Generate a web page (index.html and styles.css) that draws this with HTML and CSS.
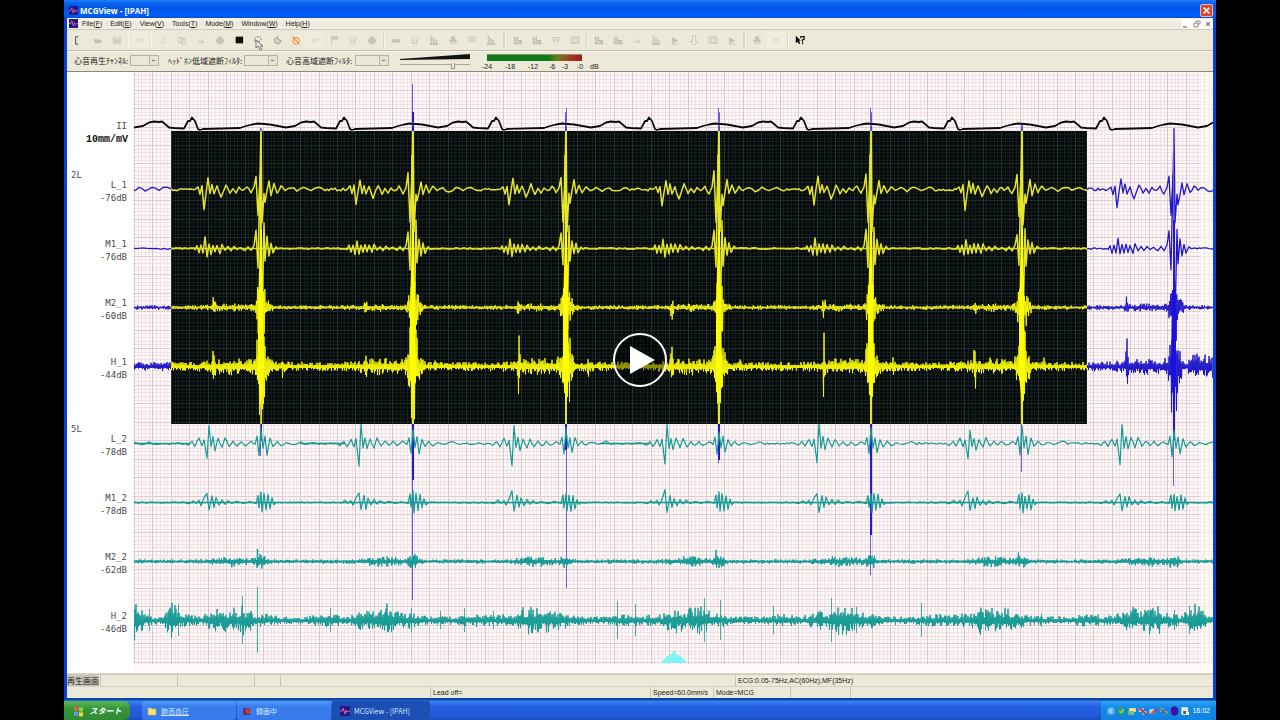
FILE: index.html
```html
<!DOCTYPE html>
<html lang="ja">
<head>
<meta charset="utf-8">
<title>MCGView - [IPAH]</title>
<link rel="stylesheet" href="styles.css">
</head>
<body>
<main class="desktop">
  <section class="app">
    <header class="titlebar">
      <svg class="app-icon" viewBox="0 0 10 10"><rect width="10" height="10" fill="#1c1a8c"/><path d="M0 5h2l1-3 2 6 1-4 1 2 3-1" fill="none" stroke="#f05a8c"/></svg>
      <h1>MCGView - [IPAH]</h1>
      <button class="close" aria-label="Close"><svg viewBox="0 0 13 13"><path d="M3 3l7 7M10 3l-7 7" stroke="#ffe9dc" stroke-width="2"/></svg></button>
    </header>
    <nav class="menubar">
      <svg class="app-icon" viewBox="0 0 10 10"><rect width="10" height="10" fill="#1c1a8c"/><path d="M0 5h2l1-3 2 6 1-4 1 2 3-1" fill="none" stroke="#f05a8c"/></svg>
      <button>File(<u>F</u>)</button><button>Edit(<u>E</u>)</button><button>View(<u>V</u>)</button><button>Tools(<u>T</u>)</button><button>Mode(<u>M</u>)</button><button>Window(<u>W</u>)</button><button>Help(<u>H</u>)</button>
      <span class="mdi">
        <button aria-label="Minimize child"><svg viewBox="0 0 8 8"><path d="M1 7h4" stroke="#555"/></svg></button>
        <button aria-label="Restore child"><svg viewBox="0 0 8 8"><path d="M3 3V1h4v3H5M1 3h4v4H1z" fill="none" stroke="#888"/></svg></button>
        <button aria-label="Close child"><svg viewBox="0 0 8 8"><path d="M2 2l4 4M6 2l-4 4" stroke="#556"/></svg></button>
      </span>
    </nav>
    <div class="toolbar" id="toolbar"></div>
    <div class="filters">
      <label class="f1"><span>心音再生ﾁｬﾝﾈﾙ:</span><select><option></option></select></label>
      <label class="f2"><span>ﾍｯﾄﾞﾎﾝ低域遮断ﾌｨﾙﾀ:</span><select><option></option></select></label>
      <label class="f3"><span>心音高域遮断ﾌｨﾙﾀ:</span><select><option></option></select></label>
      <div class="volume">
        <svg viewBox="0 0 70 7"><path d="M0 5L70 0V5L0 6z" fill="#111"/></svg>
        <input type="range" min="0" max="100" value="78" aria-label="Volume">
      </div>
      <div class="meter">
        <div class="meter-bar"></div>
        <div class="scale"><span>-24</span><span>-18</span><span>-12</span><span>-6</span><span>-3</span><span>-0</span><span>dB</span></div>
      </div>
    </div>
    <div class="chart">
      <svg id="chart" viewBox="67 72 1146 601" role="img" aria-label="Phonocardiogram">
        <defs><clipPath id="sel"><rect x="171" y="131" width="916" height="293"/></clipPath><clipPath id="plot"><rect x="134" y="72" width="1079" height="592"/></clipPath></defs>
        <rect x="67" y="72" width="1146" height="601" fill="#fff"/>
        <rect x="134" y="72" width="1079" height="600" fill="#fff9fa"/>
        <g id="grid" shape-rendering="crispEdges"></g>
        <rect x="1200" y="72" width="13" height="601" fill="#fbfbf0" opacity=".6"/>
        <path d="M661 663l6-7 4-1 3-5 3 5 4 1 6 7z" fill="#7ff4f2"/>
        <g id="traces" fill="none" stroke-linejoin="round" clip-path="url(#plot)"></g>
        <g id="labels" class="labels"></g>
      </svg>
      <button class="play" aria-label="Play"><svg viewBox="0 0 54 54"><circle cx="27" cy="27" r="26" fill="#000" fill-opacity=".4" stroke="#fff" stroke-width="2"/><path d="M17 13v28l25-14z" fill="#fff"/></svg></button>
    </div>
    <footer class="status">
      <div class="row one"><span class="mode">再生画面</span><span></span><span></span><span></span><span></span><span>ECG:0.05-75Hz,AC(60Hz),MF(35Hz)</span></div>
      <div class="row two"><span></span><span>Lead off=</span><span>Speed=60.0mm/s</span><span>Mode=MCG</span><span></span><span></span></div>
    </footer>
  </section>
  <footer class="taskbar">
    <button class="start"><svg viewBox="0 0 12 12"><path d="M1 2q2-1 4 0v4q-2-1-4 0z" fill="#f0603a"/><path d="M6 2q2 1 4 0v4q-2 1-4 0z" fill="#8ed04a"/><path d="M1 7q2-1 4 0v4q-2-1-4 0z" fill="#5d9cf5"/><path d="M6 7q2 1 4 0v4q-2 1-4 0z" fill="#f7d23e"/></svg>スタート</button>
    <button class="task"><svg viewBox="0 0 10 10"><path d="M1 2h3l1 1h4v6H1z" fill="#f6e27a" stroke="#c9a93a" stroke-width=".6"/></svg><span class="lined">肺高血圧</span></button>
    <button class="task"><svg viewBox="0 0 10 10"><rect x="1" y="2" width="7" height="7" fill="#5a3a6c"/><circle cx="6" cy="5" r="2.5" fill="#c83c3c"/></svg><span>録画中</span></button>
    <button class="task active"><svg viewBox="0 0 10 10"><rect width="10" height="10" fill="#1c1a8c"/><path d="M0 5h2l1-3 2 6 1-4 1 2 3-1" fill="none" stroke="#f05a8c"/></svg><span>MCGView - [IPAH]</span></button>
    <div class="tray">
      <svg viewBox="0 0 88 10">
        <circle cx="6" cy="5" r="4" fill="#5cb8f4"/><path d="M7 3L5 5l2 2" stroke="#fff" fill="none"/>
        <circle cx="17" cy="5" r="4" fill="#35a05c"/><path d="M15 5l2 2 2-4" stroke="#b8f0b8" fill="none"/>
        <path d="M25 2h7v4h-7z" fill="#f1e48a"/><path d="M24 5h6v4h-6z" fill="#7fc36a"/>
        <path d="M35 2h5v4h-5zM39 5h4v4h-4z" fill="#b7c4d8"/><path d="M36 2l7 7" stroke="#c6283c" stroke-width="2"/>
        <path d="M46 3h5v5h-5z" fill="#c9cbe0"/><path d="M48 8l6-6" stroke="#d33a48" stroke-width="2"/>
        <path d="M57 2h4v4h-4zM61 5h4v4h-4z" fill="#8a97a8"/><path d="M58 3l6 6" stroke="#26313c"/>
        <ellipse cx="72" cy="5" rx="4" ry="5" fill="#3a12a4"/>
        <path d="M79 1h7v8h-7z" fill="#e9e4d4"/><path d="M81 5h3v3h-3z" fill="#555"/><path d="M84 6h3v3h-3z" fill="#fff"/>
      </svg>
      <time>18:02</time>
    </div>
  </footer>
</main>
<script src="app.js"></script>
</body>
</html>
```
FILE: styles.css
```css
* { box-sizing: border-box; }
body { margin: 0; background: #000; font-family: "Liberation Sans", "Noto Sans CJK JP", sans-serif; font-size: 8px; color: #222; }
button { border: 0; padding: 0; background: none; font: inherit; color: inherit; }
svg { display: block; }
.desktop { height: 100vh; margin: 0 5%; display: grid; grid-template-rows: minmax(0, 1fr) auto; }
.app { min-height: 0; display: grid; grid-template-rows: auto auto auto auto minmax(0, 1fr) auto; border: solid #0a3fd6; border-width: 0 3px; background: #ece9d8; }
.app-icon { width: 9px; height: 9px; flex: none; }
.titlebar { height: 18px; margin: 0 -3px; padding: 2px 3px 0 5px; display: flex; align-items: center; gap: 2px; color: #fff; background: linear-gradient(#1c7cf8 0, #0a62ee 20%, #0054e3 45%, #0060fb 80%, #0050d8); }
.titlebar h1 { margin: 0; font: bold 8px "Open Sans", sans-serif; }
.close { margin-left: auto; width: 13px; height: 13px; border: 1px solid #e8b8b8; border-radius: 2px; background: #d8482c; }
.menubar { height: 12px; padding-left: 2px; display: flex; align-items: center; gap: 8px; background: linear-gradient(#f7efe4 20%, #e9ebdc 60%, #f8ece4); border-bottom: 1px solid #d0cbb8; font-size: 7px; }
.menubar .app-icon { margin-right: -4px; }
.mdi { margin-left: auto; display: flex; gap: 3px; background: #fff; padding: 1px 1px; }
.mdi svg { width: 8px; height: 8px; }
.toolbar { height: 21px; padding-left: 2px; display: flex; align-items: center; background: #ece9d8; border-bottom: 1px solid #c3bfae; }
.toolbar button { position: relative; width: 19px; height: 16px; flex: none; display: grid; place-items: center; }
.toolbar svg { width: 10px; height: 10px; }
.toolbar .dim svg { opacity: .26; filter: blur(.6px); }
.toolbar .lit { background: #f0eddf; }
.toolbar i { flex: none; height: 15px; }
.toolbar i.line { background: linear-gradient(90deg, transparent 40%, #dad6c6 40% 60%, #f8f6ee 60% 80%, transparent 80%); }
.toolbar .cursor { position: absolute; left: 7px; top: 8px; width: 12px; height: 12px; z-index: 1; }
.filters { height: 21px; padding-left: 7px; display: flex; align-items: flex-start; border-bottom: 1px solid #8b8978; border-top: 1px solid #f8f6ec; background: #ece9d8; }
.filters label { display: flex; justify-content: space-between; align-items: center; height: 17px; white-space: nowrap; font: 8px "Noto Sans CJK JP", sans-serif; }
.f1 { width: 85px; margin-right: 9px; }
.f2 { width: 110px; margin-right: 8px; }
.f3 { width: 103px; margin-right: 11px; }
.filters select { appearance: none; flex: none; width: 29px; height: 11px; padding: 0; border: 1px solid #b5b2a4; border-radius: 0; font-size: 7px; background: linear-gradient(#777, #777) right 3px top 4px / 3px 1px no-repeat, linear-gradient(90deg, #b5b2a4 1px, #e6e2d2 1px) right / 9px 100% no-repeat, #e9e6da; }
.filters .f2 select, .filters .f3 select { width: 34px; }
.volume { width: 70px; margin: 2px 17px 0 0; }
.volume svg { width: 70px; height: 7px; }
.volume input { appearance: none; display: block; width: 100%; height: 7px; margin: 1px 0 0; background: linear-gradient(#aaa89b, #aaa89b) center top 2px / 100% 1px no-repeat; }
.volume input::-webkit-slider-thumb { appearance: none; width: 4px; height: 6px; border: 1px solid #99968a; border-top: 0; background: #f4f2e8; }
.meter { width: 114px; padding-top: 2px; }
.meter-bar { width: 95px; height: 7px; border-top: 1px solid #8f8c78; background: linear-gradient(90deg, #0c7a16 65%, #6a8218 74%, #9c4a1e 84%, #a81618); }
.scale { display: grid; grid-template-columns: 23px 23px 21px 13px 15px 13px 12px; margin-left: -5px; font-size: 7px; line-height: 12px; }
.chart { min-height: 0; min-width: 0; position: relative; background: #fff; }
.chart > svg { width: 100%; height: 100%; }
.labels { font-family: "DejaVu Sans Mono", monospace; font-size: 9px; fill: #4a4a4a; }
.labels .bold { font: bold 10px "Liberation Mono", monospace; fill: #111; }
.play { position: fixed; left: 50%; top: 50%; width: 54px; height: 54px; transform: translate(-50%, -50%); }
.status { background: #ece9d8; font-size: 7px; line-height: 11px; border-top: 1px solid #d9d5c5; }
.status .row { height: 12px; display: grid; white-space: nowrap; }
.status .row span { border-left: 1px solid #c9c5b4; padding-left: 2px; overflow: hidden; }
.status .row span:first-child { border: 0; }
.status .one { grid-template-columns: 33px 77px 77px 26px 455px 1fr; border-top: 1px solid #cfcbbb; }
.status .two { grid-template-columns: 363px 220px 63px 77px 60px 1fr; border-top: 1px solid #d6d2c2; }
.status .row .mode { padding: 0; font: 8px/11px "Noto Sans CJK JP", sans-serif; justify-self: start; background: #c8c5b8; }
.taskbar { height: 22px; padding-top: 3px; display: flex; background: linear-gradient(#0a48a8 0 2px, #3c86f4 3px, #2560de 8px, #2159d8 80%, #1c4cc0); color: #fff; font: 7px "Noto Sans CJK JP", sans-serif; }
.start { width: 66px; margin-right: 12px; display: flex; align-items: center; justify-content: center; gap: 5px; background: linear-gradient(#5fb85a, #35963a 40%, #2f8a34); border-radius: 0 6px 6px 0; font: italic bold 8px "Noto Sans CJK JP", sans-serif; }
.start svg { width: 12px; height: 12px; }
.task { width: 94px; margin-right: 1px; padding-left: 5px; display: flex; align-items: center; gap: 4px; border-radius: 2px; background: linear-gradient(#5098fa, #3a7eee 30%, #3878ea); color: #d8e8ff; }
.task svg { width: 10px; height: 10px; }
.task .lined { text-decoration: underline; }
.task.active { width: 98px; padding-left: 8px; background: #1c4eb4; }
.tray { width: 115px; margin-left: auto; padding: 0 6px 0 4px; display: flex; align-items: center; justify-content: space-between; background: linear-gradient(#28a4f4, #1288e6 40%, #1284e0); }
.tray svg { width: 85px; height: 10px; }
.tray time { font: 7px "Liberation Sans", sans-serif; white-space: nowrap; }
```
FILE: app.js
```js
const NS = 'http://www.w3.org/2000/svg';
function add(parent, name, attrs, text) {
  const el = document.createElementNS(NS, name);
  for (const k in attrs) el.setAttribute(k, attrs[k]);
  if (text) el.textContent = text;
  parent.appendChild(el);
  return el;
}

/* Toolbar */
const shapes = {
  page: '<path d="M5 2H2v9h3" fill="none" stroke="#333"/>',
  open: '<path d="M1 5h6l1 1h3l-2 4H2z" fill="#555"/>',
  save: '<path d="M1 2h10v9H1z" fill="#888"/><path d="M3 2h6v3H3z" fill="#ccc"/>',
  soft: '<path d="M2 4h8v5H2z" fill="#bbb"/>',
  cut: '<path d="M4 2l4 6M8 2L4 8" stroke="#999"/><path d="M2 9h8" stroke="#999"/>',
  copy: '<path d="M2 3h5v6H2zM5 5h5v6H5z" fill="none" stroke="#555"/>',
  arrow: '<path d="M2 7h5V4l3 4-3 3V9H2z" fill="#888"/>',
  print: '<path d="M3 2h6v9H3zM1 5h10v4H1z" fill="#666"/>',
  black: '<path d="M2 2h9v8H2z" fill="#0c0c04"/>',
  glass: '<path d="M2 7Q2 2 6 2t4 4" fill="none" stroke="#555" stroke-dasharray="2 1"/><path d="M3 7h5v2H3z" fill="#777"/>',
  hand: '<path d="M3 5l4-3v3l4 2-3 4-5-2z" fill="#d4d1c4" stroke="#999686"/>',
  red: '<circle cx="6" cy="7" r="4" fill="#ffe6c0" stroke="#ef7a35"/><path d="M2 2l8 9" stroke="#e85038"/><path d="M3 2l2 1M4 7h4" stroke="#e8b030"/>',
  flag: '<path d="M3 11V2h7v3H3" fill="#777" stroke="#555"/>',
  note: '<path d="M3 2v8h5V6H5" fill="none" stroke="#555"/><path d="M7 3h3v4" fill="none" stroke="#777"/>',
  bars: '<path d="M3 1v10M6 4v7M9 6v5M1 11h10" stroke="#555" stroke-width="2"/>',
  width: '<path d="M1 5h10v4H1z" fill="#555"/>',
  tee: '<path d="M1 3h10M4 3v7M8 3v7M1 6h10" stroke="#555"/>',
  zoom: '<path d="M2 2v8h8M5 2v5h6M8 8l3 3" fill="none" stroke="#444" stroke-width="2"/>',
  play: '<path d="M3 3l6 4-6 3zM1 11h10" fill="#555" stroke="#666"/>',
  down: '<path d="M4 1h4v7h3l-5 4-5-4h3z" fill="#fff" stroke="#444"/>',
  box: '<path d="M1 2h10v8H1zM4 4h5v5H4z" fill="#ddd" stroke="#555"/>',
  man: '<path d="M4 2h4v4h2v2H2V6h2zM2 10h8" fill="#555" stroke="#555"/>',
  help: '<path d="M1 1v9l2-2 2 3 1-1-1-3h2z" fill="#000"/><path d="M7 4V2h4v3L9 6v2M9 9v2" fill="none" stroke="#111" stroke-width="1.5"/>'
};
const layout = [['page', 'open', 'save'], 4, ['soft'], 4, ['cut', 'copy', 'arrow', 'print', 'black', 'glass', 'hand', 'red', 'soft', 'flag', 'note', 'print'], 5,
  ['width', 'note', 'bars', 'man', 'tee', 'bars'], 8, ['zoom', 'zoom', 'tee', 'box'], 5,
  ['zoom', 'zoom', 'arrow', 'bars', 'play', 'down', 'box', 'play'], 6, ['man', 'soft'], 5, ['help']];
const bright = new Set(['page', 'black', 'red', 'glass', 'hand', 'help']);
const bar = document.getElementById('toolbar');
layout.forEach(part => {
  if (typeof part === 'number') {
    const sep = document.createElement('i');
    sep.className = 'line';
    sep.style.width = part + 'px';
    bar.appendChild(sep);
    return;
  }
  part.forEach(name => {
    const b = document.createElement('button');
    b.setAttribute('aria-label', name);
    if (!bright.has(name)) b.className = 'dim';
    if (name === 'soft') b.classList.add('lit');
    b.innerHTML = '<svg viewBox="0 0 12 12">' + shapes[name] + '</svg>';
    if (name === 'glass') b.innerHTML += '<svg class="cursor" viewBox="0 0 12 12"><path d="M1 0v8l2-2 2 4 2-1-2-3h3z" fill="#e8e8e0" stroke="#666" stroke-width=".8"/></svg>';
    bar.appendChild(b);
  });
});

/* Graph paper */
const grid = document.getElementById('grid');
const pitch = 3.69;
function paper(parent, x0, x1, y0, y1, minor, majorX, majorY) {
  const d = { minor: '', x: '', y: '' };
  for (let k = 0; 134 + k * pitch < x1; k++) {
    const x = Math.round(134 + k * pitch) + 0.5;
    if (x > x0) d[k % 5 ? 'minor' : 'x'] += `M${x} ${y0}V${y1}`;
  }
  for (let k = -19; 145 + k * pitch < y1; k++) {
    const y = Math.round(145 + k * pitch) + 0.5;
    if (y > y0) d[k % 5 ? 'minor' : 'y'] += `M${x0} ${y}H${x1}`;
  }
  add(parent, 'path', { d: d.minor, stroke: minor });
  add(parent, 'path', { d: d.x, stroke: majorX });
  add(parent, 'path', { d: d.y, stroke: majorY });
}
paper(grid, 133, 1213, 72, 664, '#f0e2e4', '#d6c8cc', '#e0cbcf');

/* Signals */
let seed = 7;
const rnd = () => { seed = (seed * 16807) % 2147483647; return seed / 2147483647 * 2 - 1; };
const beats = [109, 261, 413, 566, 719, 871, 1022, 1174, 1326];
const bell = (x, c, w) => Math.exp(-(((x - c) / w) ** 2));

function shaped(base, template, ripple, scales) {
  const pts = [];
  beats.forEach((b, i) => {
    const first = template[0][0], last = template[template.length - 1][0];
    template.forEach(([dx, dy]) => {
      const big = Math.abs(dy) > 25;
      const s = big ? (scales ? scales[i] : 1) : 1 + rnd() * 0.25;
      const px = b + dx, py = base + dy * s;
      const prev = pts[pts.length - 1];
      if (prev && px - prev[0] > 3) pts.push([(px + prev[0]) / 2, (py + prev[1]) / 2 + rnd() * ripple]);
      pts.push([px, py]);
    });
    for (let dx = last + 2; dx < 152 + first; dx += 2) pts.push([b + dx, base + rnd() * ripple]);
  });
  return 'M' + pts.map(p => p[0].toFixed(1) + ' ' + p[1].toFixed(1)).join('L');
}
function noisy(base, env, step) {
  let d = '', s = 1;
  for (let x = 134; x < 1213; x += step) {
    s = -s;
    const e = env(x), r = Math.abs(rnd());
    d += (d ? 'L' : 'M') + x.toFixed(1) + ' ' + (base + s * e * (0.3 + r * r * 0.9)).toFixed(1);
  }
  return d;
}
const near = (x, off, w) => beats.reduce((m, b) => Math.max(m, bell(x, b + off, w)), 0);

const L1 = [[-66,0],[-63,-3],[-61,4],[-59,-4],[-57,17],[-53,-11],[-51,4],[-49,-5],[-47,4],[-44,-3],[-40,8],[-35,-5],[-31,4],[-28,-1],[-25,3],[-22,-2],[-18,1],[-14,-3],[-10,4],[-7,-2],[-5,-15],[-3,27],[-1,-10],[0,-64],[1,35],[3,5],[4,13],[8,-8],[10,5],[13,-5],[16,3],[20,-3],[24,1],[30,-2],[36,2],[43,-2],[50,1],[58,-2],[64,1]];
const M1 = [[-66,1],[-64,-3],[-62,4],[-60,-3],[-58,6],[-56,-10],[-54,7],[-52,-4],[-50,5],[-48,-4],[-46,4],[-44,-4],[-41,4],[-39,-4],[-36,2],[-33,-2],[-30,2],[-27,-2],[-24,1],[-20,-1],[-16,2],[-13,-2],[-10,2],[-7,-3],[-5,-16],[-3,18],[-1,-78],[1,80],[3,-24],[4,15],[6,-10],[8,6],[10,-5],[12,4],[15,-2]];
const L2 = [[-76,0],[-73,2],[-69,-2],[-66,3],[-62,-5],[-59,3],[-57,-4],[-54,19],[-52,-17],[-50,4],[-48,-6],[-46,6],[-43,-5],[-39,4],[-36,-5],[-32,3],[-28,-2],[-24,2],[-20,-2],[-16,2],[-10,-2],[-6,1],[-4,-7],[-2,12],[0,-14],[2,4],[4,-6],[6,10],[9,-5],[12,3],[16,-2],[20,2],[25,-1],[32,1],[40,-2],[46,1]];
const M2b = [[-76,0],[-72,1],[-68,-2],[-65,1],[-62,-2],[-60,3],[-57,-4],[-54,-11],[-52,9],[-49,-6],[-47,6],[-45,-5],[-42,3],[-39,-3],[-36,2],[-33,-2],[-29,1],[-24,-1],[-18,1],[-12,-1],[-5,1],[-3,-8],[-2,6],[0,-10],[1,9],[3,-8],[5,8],[7,-7],[9,6],[11,-4],[13,2]];

const up = [1, 0.95, 1.2, 1.2, 1.2, 1.2, 1, 0.95, 1];
const upper = [
  shaped(189.5, L1, 1.4, up),
  shaped(248.5, M1, 0.8, up),
  noisy(307.5, x => 2 + near(x, 0, 3.5) * 30 + near(x, 2, 7) * 8 + near(x, -47, 1.5) * 9 + near(x, -30, 18) * 1.6, 0.6),
  noisy(366.5, x => 4 + near(x, 0, 3) * 50 + near(x, 1, 7) * 15 + near(x, -47, 0.9) * 30 + near(x, -30, 22) * 3.5 + near(x, 22, 1) * 8 + (x > 1188 ? 7 : 0), 0.5)
];
const traces = document.getElementById('traces');
upper.forEach((d, i) => add(traces, 'path', { d, stroke: '#2018c8', 'stroke-width': i < 2 ? 1.3 : 1 }));
add(traces, 'path', { d: 'M412.500 84V600M566.500 108V588M718.500 108V463M870.500 108V575M1021.500 424V472M1173.500 128V486M260.500 424V456', stroke: '#6a5ed4' });
add(traces, 'path', { d: 'M413 112V480M719 424V460M871 424V535M566 424V450M1174 220V440', stroke: '#2418d0', 'stroke-width': 2 });
const ragged = x => Math.abs(Math.sin(x * 0.37) * Math.sin(x * 0.11));
const teal = [
  shaped(443.5, L2, 1),
  shaped(502.5, M2b, 0.6),
  noisy(561.5, x => 1.8 + near(x, 0, 5) * 5 + near(x, -30, 20) * 3 + near(x, -3, 0.8) * 4, 0.6),
  noisy(620.5, x => 3.4 + near(x, -28, 27) * (5 + 7 * ragged(x)) + near(x, 65, 16) * 2 + bell(x, 134, 8) * 16 + bell(x, 172, 6) * 10 + bell(x, 1196, 9) * 11, 0.5)
];
teal.forEach((d, i) => add(traces, 'path', { d, stroke: '#159b96', 'stroke-width': i < 2 ? 1.2 : 1 }));
[[149,11],[178,16],[242,24],[257,33],[330,12],[411,12],[440,9],[464,12],[493,9],[617,19],[635,16],[704,22],[720,20],[773,14],[831,22],[856,13],[921,17],[985,11],[1041,7],[1150,11],[1174,10],[1189,14]].forEach(([x, h]) =>
  add(traces, 'path', { d: `M${x + 0.5} ${620 - h}V${620 + h}`, stroke: '#159b96', opacity: 0.8 }));
add(traces, 'path', { d: 'M257.500 549V566M134 443.500H190M134 502.500H1213M300 443.500H345M600 443.500H650M134 561.500H1213', stroke: '#159b96', 'stroke-width': 1.5 });

/* Selected range */
add(traces, 'rect', { x: 171, y: 131, width: 916, height: 293, fill: '#050909' });
const shade = add(traces, 'g', { 'shape-rendering': 'crispEdges' });
paper(shade, 171, 1087, 131, 424, '#121d1c', '#283431', '#1e2b29');
const lit = add(traces, 'g', { 'clip-path': 'url(#sel)' });
upper.forEach((d, i) => add(lit, 'path', { d, stroke: i < 2 ? '#e4e42c' : '#f4f40c', 'stroke-width': i < 2 ? 1.5 : 1 }));
add(lit, 'path', { d: 'M171 248.500H1087M171 307.500H1087', stroke: '#dcdc28', 'stroke-width': 1.5 });
beats.forEach((b, i) => {
  add(lit, 'path', { d: `M${b} 131V424`, stroke: '#e6e62a', 'stroke-width': i === 1 ? 1.5 : 2 });
  add(lit, 'path', { d: `M${b - 1} 230L${b - 3} 310L${b - 3} 375L${b} 405L${b + 3} 370L${b + 2} 300L${b + 1} 230z`, fill: '#ffff00' });
});
add(traces, 'path', { d: 'M1172 290L1171 375L1174 405L1176 370L1175 290z', fill: '#1810e0' });

/* Electrocardiogram */
const cycle = [[-58,127.5],[-49,126],[-43,122.5],[-38,121.5],[-33,122],[-30,121.5],[-27,124],[-23,127.5],[-18,128],[-8,128.5],[-5,123],[-4,121],[-2,121],[0,117.5],[3,121],[6,129],[8,130],[11,129],[48,128],[54,126],[60,124.5],[66,123.5],[78,124.5]];
const ecg = [40, 192, 344, 496, 649, 801, 952, 1104, 1256].flatMap(p => cycle.map(([x, y]) => (p + x) + ' ' + y));
add(traces, 'path', { d: 'M' + ecg.join('L'), stroke: '#fff', 'stroke-width': 3, opacity: 0.6 });
add(traces, 'path', { d: 'M' + ecg.join('L'), stroke: '#0a0a0a', 'stroke-width': 1.8 });

/* Channel labels */
const labels = document.getElementById('labels');
[['II', 129], ['L_1', 188], ['-76dB', 201], ['M1_1', 247], ['-76dB', 260], ['M2_1', 306], ['-60dB', 319], ['H_1', 365], ['-44dB', 378],
 ['L_2', 442], ['-78dB', 455], ['M1_2', 501], ['-78dB', 514], ['M2_2', 560], ['-62dB', 573], ['H_2', 619], ['-46dB', 632]].forEach(([t, y]) =>
  add(labels, 'text', { x: 127, y, 'text-anchor': 'end' }, t));
add(labels, 'text', { x: 128, y: 142, 'text-anchor': 'end', class: 'bold' }, '10mm/mV');
add(labels, 'text', { x: 71, y: 178 }, '2L');
add(labels, 'text', { x: 71, y: 432 }, '5L');
```
